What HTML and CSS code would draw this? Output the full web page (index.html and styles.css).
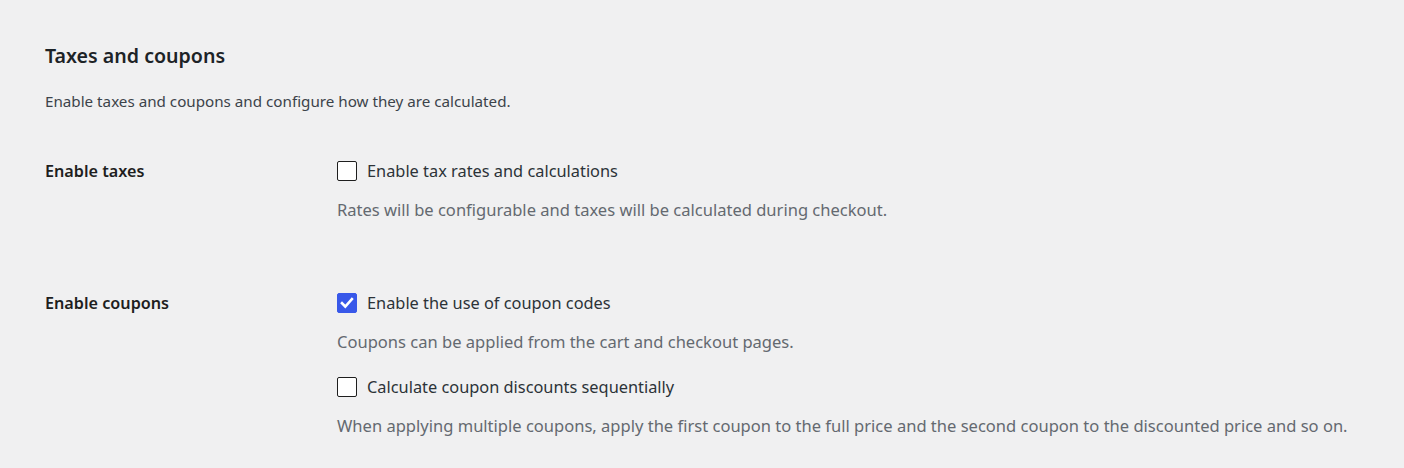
FILE: index.html
```html
<!DOCTYPE html>
<html lang="en">
<head>
  <meta charset="UTF-8">
  <title>Taxes and coupons</title>
  <link rel="stylesheet" href="styles.css">
</head>
<body>

  <div class="settings">
    <h2>Taxes and coupons</h2>
    <p class="intro">Enable taxes and coupons and configure how they are calculated.</p>

    <div class="row row-taxes">
      <div class="row-label">Enable taxes</div>
      <div class="row-field">
        <label class="check">
          <span class="box"></span>
          Enable tax rates and calculations
        </label>
        <p class="help">Rates will be configurable and taxes will be calculated during checkout.</p>
      </div>
    </div>

    <div class="row row-coupons">
      <div class="row-label">Enable coupons</div>
      <div class="row-field">
        <label class="check">
          <span class="box checked">
            <svg width="20" height="20" viewBox="0 0 20 20"><path d="M5 10.2l3.3 3.3 6.6-7.3" fill="none" stroke="#fff" stroke-width="2.6" stroke-linecap="square"/></svg>
          </span>
          Enable the use of coupon codes
        </label>
        <p class="help">Coupons can be applied from the cart and checkout pages.</p>
        <label class="check check-second">
          <span class="box"></span>
          Calculate coupon discounts sequentially
        </label>
        <p class="help">When applying multiple coupons, apply the first coupon to the full price and the second coupon to the discounted price and so on.</p>
      </div>
    </div>
  </div>

</body>
</html>
```

FILE: styles.css
```css
body {
  background-color: #f0f0f1;
  color: #1e1e1e;
  font-family: "Noto Sans", "Open Sans", sans-serif;
  margin: 0;
  padding: 0;
}

.settings {
  padding: 42px 45px 0 45px;
}

.settings h2 {
  font-size: 19.6px;
  font-weight: 600;
  line-height: 28px;
  color: #1d2327;
  margin: 0;
}

.intro {
  font-size: 15.2px;
  line-height: 20px;
  color: #3c434a;
  margin: 21px 0 0 0;
}

.row {
  display: flex;
}

.row-taxes {
  margin-top: 48px;
}

.row-coupons {
  margin-top: 69px;
}

.row-label {
  width: 292px;
  flex-shrink: 0;
  font-size: 16.2px;
  font-weight: 600;
  line-height: 24px;
  color: #1e1e1e;
}

.row-field {
  font-size: 16px;
  line-height: 24px;
}

.check {
  display: flex;
  align-items: center;
  gap: 10px;
  font-size: 16.35px;
  color: #2c3338;
}

.check-second {
  margin-top: 21px;
}

.box {
  width: 20px;
  height: 20px;
  box-sizing: border-box;
  border: 1.5px solid #1e1e1e;
  border-radius: 2px;
  background-color: #fff;
  flex-shrink: 0;
  position: relative;
}

.box.checked {
  background-color: #3858e9;
  border-color: #3858e9;
}

.box.checked svg {
  position: absolute;
  left: -1.5px;
  top: -1.5px;
}

.help {
  font-size: 16.55px;
  color: #646970;
  margin: 15px 0 0 0;
}
```
